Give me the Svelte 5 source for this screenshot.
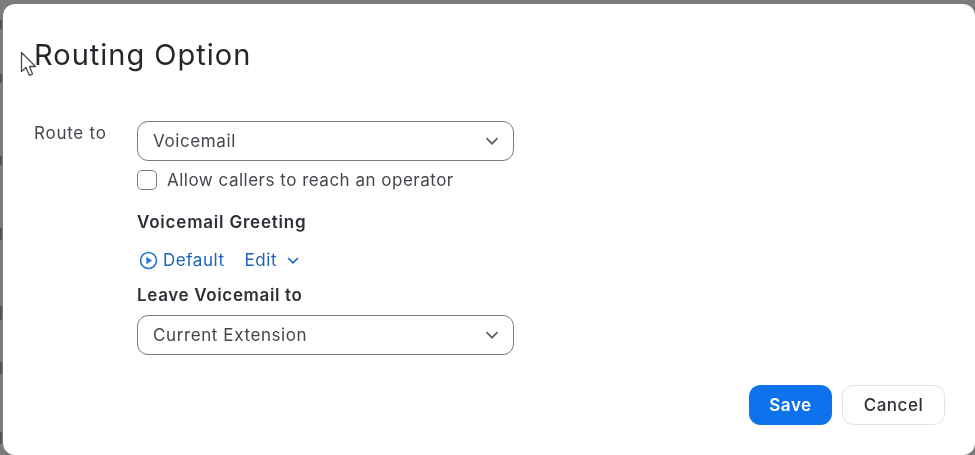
<script lang="ts">
  let allowOperator = $state(false);
</script>

<div class="page">
  <div class="edge-marks" aria-hidden="true">
    <i style="top: 20px; height: 9px"></i>
    <i style="top: 74px; height: 9px"></i>
    <i style="top: 156px; height: 9px"></i>
    <i style="top: 228px; height: 12px"></i>
    <i style="top: 306px; height: 14px"></i>
    <i style="top: 362px; height: 12px"></i>
    <i style="top: 432px; height: 12px"></i>
  </div>

  <section class="modal">
    <svg class="cursor" width="18" height="27" viewBox="0 0 18 27" aria-hidden="true">
      <path d="M1.5 1.5 L1.5 20.5 L6 16.5 L9.5 24.5 L12.5 23 L9.5 15.5 L15.5 15.5 Z" fill="#fff" stroke="#4a4a4e" stroke-width="1.3" stroke-linejoin="round" />
    </svg>

    <h1>Routing Option</h1>

    <div class="form">
      <div class="label">Route to</div>
      <div class="fields">
        <button type="button" class="select">
          <span>Voicemail</span>
          <svg width="14" height="8" viewBox="0 0 14 8" aria-hidden="true"><path d="M1.5 1.2 L7 6.7 L12.5 1.2" /></svg>
        </button>

        <label class="check">
          <input type="checkbox" bind:checked={allowOperator} />
          <span>Allow callers to reach an operator</span>
        </label>

        <h2 class="greeting">Voicemail Greeting</h2>

        <div class="links">
          <button type="button" class="link play">
            <svg width="19" height="19" viewBox="0 0 19 19" aria-hidden="true">
              <circle cx="9.5" cy="9.5" r="8" />
              <path d="M7.4 5.8 L13 9.5 L7.4 13.2 Z" />
            </svg>
            Default
          </button>
          <button type="button" class="link edit">
            Edit
            <svg width="12" height="7" viewBox="0 0 12 7" aria-hidden="true"><path d="M1 1 L6 5.8 L11 1" /></svg>
          </button>
        </div>

        <h2 class="leave">Leave Voicemail to</h2>

        <button type="button" class="select">
          <span>Current Extension</span>
          <svg width="14" height="8" viewBox="0 0 14 8" aria-hidden="true"><path d="M1.5 1.2 L7 6.7 L12.5 1.2" /></svg>
        </button>
      </div>
    </div>

    <div class="actions">
      <button type="button" class="btn primary">Save</button>
      <button type="button" class="btn">Cancel</button>
    </div>
  </section>
</div>

<style>
  :global(body) {
    margin: 0;
    background: #7c7c7c;
    overflow: hidden;
  }
  .page {
    position: relative;
    width: 975px;
    height: 455px;
    padding: 4px 0 0 3px;
    box-sizing: border-box;
    overflow: hidden;
    font-family: Inter, "Liberation Sans", sans-serif;
  }
  .edge-marks i {
    position: absolute;
    left: 0;
    width: 2px;
    background: #55555a;
    filter: blur(0.6px);
  }
  .modal {
    position: relative;
    box-sizing: border-box;
    width: 972px;
    height: 451px;
    padding: 33px 30px 0 31px;
    background: #fff;
    border-radius: 12px;
    filter: blur(0.35px);
  }
  .cursor {
    position: absolute;
    left: 17px;
    top: 47px;
  }
  h1 {
    margin: 0;
    font-size: 29px;
    line-height: 36px;
    font-weight: 400;
    letter-spacing: 1px;
    color: #26262c;
  }
  .form {
    display: flex;
    margin-top: 48px;
  }
  .label {
    width: 103px;
    flex: none;
    font-size: 17px;
    letter-spacing: 0.75px;
    line-height: 24px;
    color: #45454d;
  }
  .fields {
    width: 377px;
  }
  .select {
    display: flex;
    align-items: center;
    justify-content: space-between;
    box-sizing: border-box;
    width: 100%;
    height: 40px;
    padding: 0 14px 0 15px;
    background: #fff;
    border: 1.3px solid #7c7c84;
    border-radius: 11px;
    font: inherit;
    font-size: 17px;
    letter-spacing: 0.6px;
    color: #45454d;
  }
  .select svg path {
    fill: none;
    stroke: #5e5e66;
    stroke-width: 1.7;
  }
  .check {
    display: flex;
    align-items: center;
    gap: 10px;
    margin-top: 9px;
    height: 20px;
    font-size: 17px;
    letter-spacing: 0.5px;
    color: #45454d;
  }
  .check input {
    appearance: none;
    box-sizing: border-box;
    width: 20px;
    height: 20px;
    margin: 0;
    border: 1.3px solid #7c7c84;
    border-radius: 5px;
    background: #fff;
  }
  h2 {
    margin: 0;
    font-size: 17px;
    letter-spacing: 0.65px;
    line-height: 22px;
    font-weight: 600;
    color: #2f2f37;
  }
  .greeting {
    margin-top: 21px;
    letter-spacing: 0.8px;
  }
  .links {
    display: flex;
    align-items: center;
    gap: 20px;
    margin-top: 15px;
    height: 24px;
  }
  .link {
    display: flex;
    align-items: center;
    padding: 0;
    background: none;
    border: 0;
    font: inherit;
    font-size: 17px;
    letter-spacing: 0.55px;
    color: #1c63bd;
  }
  .play {
    gap: 5px;
    margin-left: 2px;
  }
  .play circle {
    fill: none;
    stroke: #2a74d2;
    stroke-width: 1.6;
  }
  .play path {
    fill: #2a74d2;
  }
  .edit {
    gap: 10px;
  }
  .edit path {
    fill: none;
    stroke: #1c63bd;
    stroke-width: 1.6;
  }
  .leave {
    margin: 12px 0 9px;
    letter-spacing: 0.65px;
  }
  .actions {
    display: flex;
    justify-content: flex-end;
    gap: 10px;
    margin-top: 30px;
  }
  .btn {
    box-sizing: border-box;
    height: 40px;
    width: 103px;
    background: #fff;
    border: 1.3px solid #e4e4e8;
    border-radius: 11px;
    font: inherit;
    font-size: 17px;
    letter-spacing: 0.55px;
    font-weight: 500;
    color: #2f2f37;
  }
  .primary {
    width: 83px;
    background: #0e72ed;
    border-color: #0e72ed;
    font-weight: 600;
    color: #fff;
  }
</style>
